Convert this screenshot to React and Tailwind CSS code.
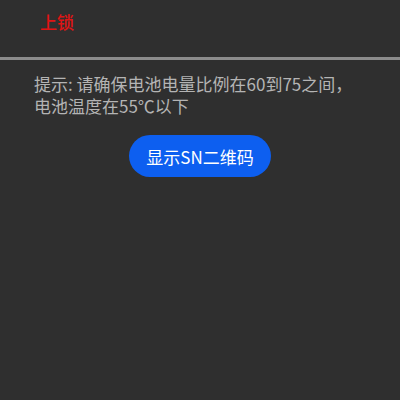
export default function App() {
  return (
    <div
      className="w-[400px] h-[400px] bg-[#2f2f2f] flex flex-col"
      style={{ fontFamily: '"Noto Sans CJK SC", "Noto Sans", sans-serif' }}
    >
      {/* Header */}
      <div className="h-[57px] pl-[40px] pt-[10px]">
        <span className="text-[17px] leading-[22px] font-medium text-[#e01414]">上锁</span>
      </div>
      <div className="h-[3px] bg-[#8c8c8c]" />

      {/* Tip */}
      <div className="pl-[34px] pr-[10px] pt-[13px] text-[17px] leading-[22px] text-[#b4b4b4]">
        <p className="whitespace-nowrap">提示: 请确保电池电量比例在60到75之间，</p>
        <p>电池温度在55℃以下</p>
      </div>

      <div className="flex justify-center pt-[18px]">
        <button className="w-[142px] h-[42px] rounded-full bg-[#0d5ff0] text-white text-[17px] leading-none">
          显示SN二维码
        </button>
      </div>
    </div>
  );
}
